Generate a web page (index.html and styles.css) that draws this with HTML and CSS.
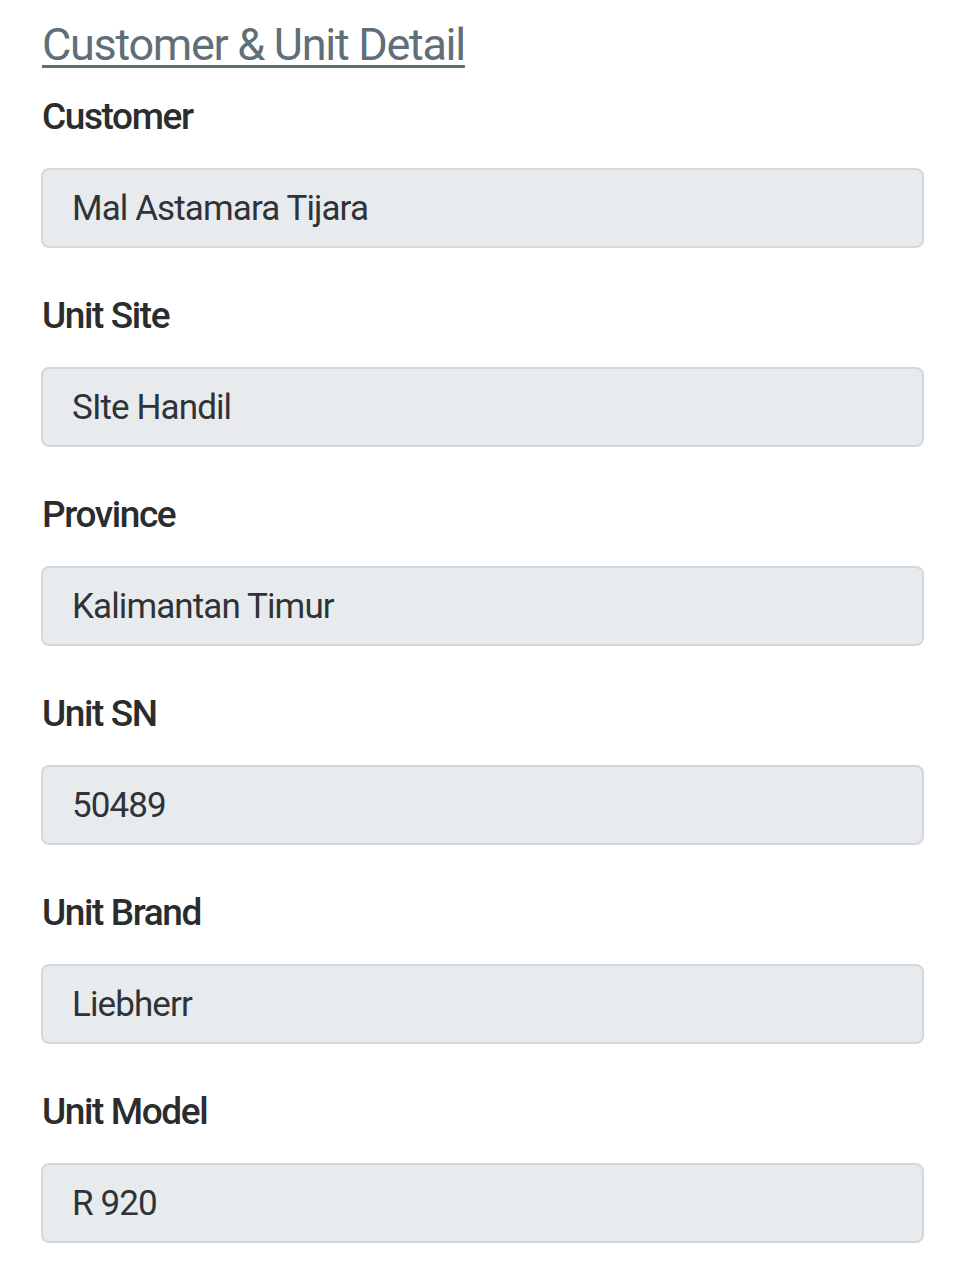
FILE: index.html
```html
<!DOCTYPE html>
<html lang="id">
<head>
<meta charset="utf-8">
<title>Customer &amp; Unit Detail</title>
<link rel="stylesheet" href="styles.css">
</head>
<body>
<main class="page">
  <h2 class="title">Customer &amp; Unit Detail</h2>
  <div class="field">
    <div class="label">Customer</div>
    <div class="input">Mal Astamara Tijara</div>
  </div>
  <div class="field">
    <div class="label">Unit Site</div>
    <div class="input">SIte Handil</div>
  </div>
  <div class="field">
    <div class="label">Province</div>
    <div class="input">Kalimantan Timur</div>
  </div>
  <div class="field">
    <div class="label">Unit SN</div>
    <div class="input">50489</div>
  </div>
  <div class="field">
    <div class="label">Unit Brand</div>
    <div class="input">Liebherr</div>
  </div>
  <div class="field">
    <div class="label">Unit Model</div>
    <div class="input">R 920</div>
  </div>
</main>
</body>
</html>
```

FILE: styles.css
```css
html, body {
  margin: 0;
  padding: 0;
  background: #ffffff;
}
body {
  font-family: Roboto, "Liberation Sans", sans-serif;
}
.page {
  padding: 17px 43px 0 41px;
  display: flex;
  flex-direction: column;
}
.title {
  margin: 0 0 22px 1px;
  font-size: 45px;
  line-height: 56px;
  font-weight: 400;
  letter-spacing: -1.3px;
  color: #5f6f79;
  text-decoration: underline;
  text-decoration-thickness: 3px;
  text-underline-offset: 5px;
  align-self: flex-start;
}
.field {
  display: flex;
  flex-direction: column;
  margin-bottom: 46px;
}
.label {
  margin: 0 0 29px 1px;
  font-size: 37px;
  line-height: 44px;
  font-weight: 500;
  letter-spacing: -1.4px;
  color: #2a2c2e;
}
.input {
  box-sizing: border-box;
  height: 80px;
  padding: 0 29px;
  display: flex;
  align-items: center;
  background: #e8ebee;
  border: 2px solid #d4d8dc;
  border-radius: 8px;
  font-size: 35px;
  letter-spacing: -0.9px;
  color: #2f3338;
}
```
